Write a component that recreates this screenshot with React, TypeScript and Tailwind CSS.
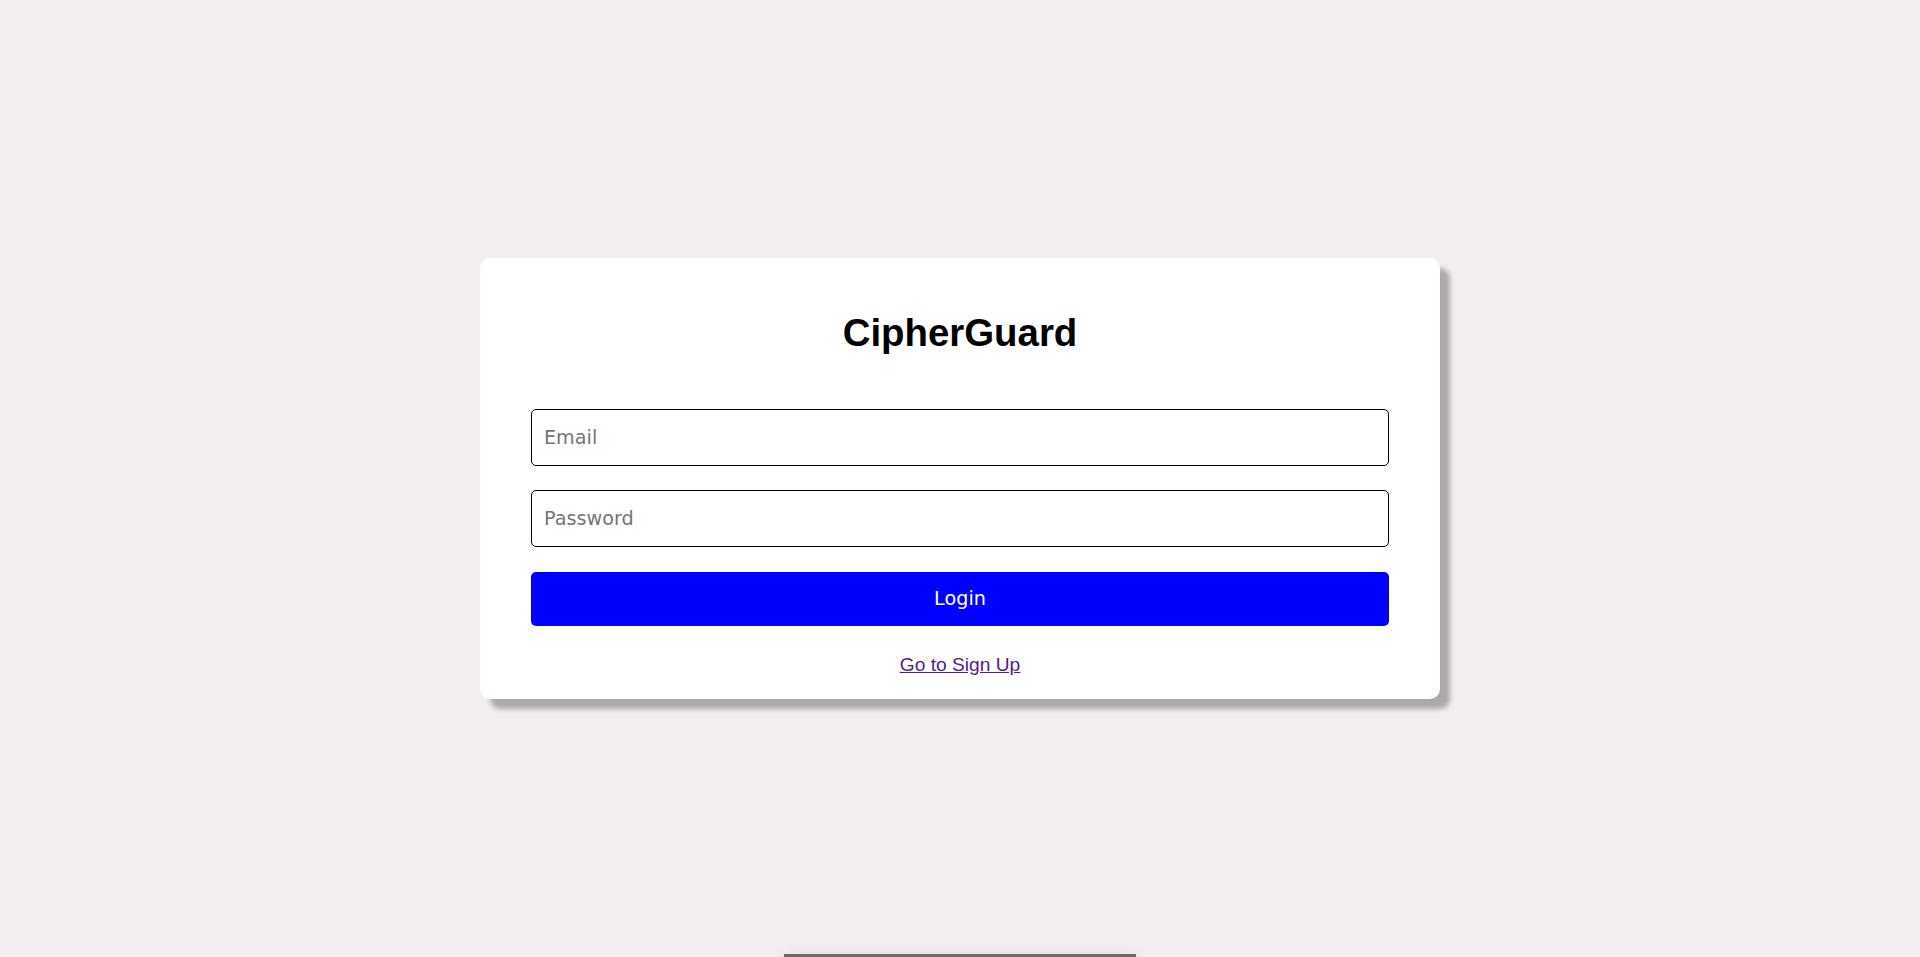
import { useState } from 'react';

const LoginCard = () => {
  const [email, setEmail] = useState('');
  const [password, setPassword] = useState('');

  return (
    <div className="w-[960px] rounded-[10px] bg-white px-[51px] pt-[53px] pb-[22px] shadow-[10px_10px_5px_#aaaaaa]">
      <h1 className="h-[44px] text-center font-['Liberation_Sans',Arial,sans-serif] text-[38.4px] leading-[44px] font-bold text-black">
        CipherGuard
      </h1>
      <form
        className="mt-[54px] flex flex-col"
        onSubmit={(e) => e.preventDefault()}
      >
        <input
          type="email"
          placeholder="Email"
          value={email}
          onChange={(e) => setEmail(e.target.value)}
          className="h-[57px] w-full rounded-[5px] border border-black px-[12px] font-['DejaVu_Sans',sans-serif] text-[19.2px] text-black outline-none placeholder:text-[#757575]"
        />
        <input
          type="password"
          placeholder="Password"
          value={password}
          onChange={(e) => setPassword(e.target.value)}
          className="mt-[24px] h-[57px] w-full rounded-[5px] border border-black px-[12px] font-['DejaVu_Sans',sans-serif] text-[19.2px] text-black outline-none placeholder:text-[#757575]"
        />
        <button
          type="submit"
          className="mt-[25px] h-[54px] w-full rounded-[5px] bg-[#0000ff] font-['DejaVu_Sans',sans-serif] text-[19.2px] text-white"
        >
          Login
        </button>
      </form>
      <div className="mt-[27px] text-center">
        <a
          href="#signup"
          className="font-['Liberation_Sans',Arial,sans-serif] text-[19.2px] leading-[22px] text-[#551a8b] underline"
        >
          Go to Sign Up
        </a>
      </div>
    </div>
  );
};

export default function App() {
  return (
    <div className="relative flex h-[957px] w-full items-center justify-center overflow-hidden bg-[#f2eeed]">
      <LoginCard />
      {/* peek of an element sitting below the fold */}
      <div className="absolute top-[954px] left-1/2 h-[40px] w-[352px] -translate-x-1/2 border-t-[3px] border-[#6b6a6b] bg-[#e8e6e5] shadow-[0_0_16px_rgba(0,0,0,0.06)]" />
    </div>
  );
}
